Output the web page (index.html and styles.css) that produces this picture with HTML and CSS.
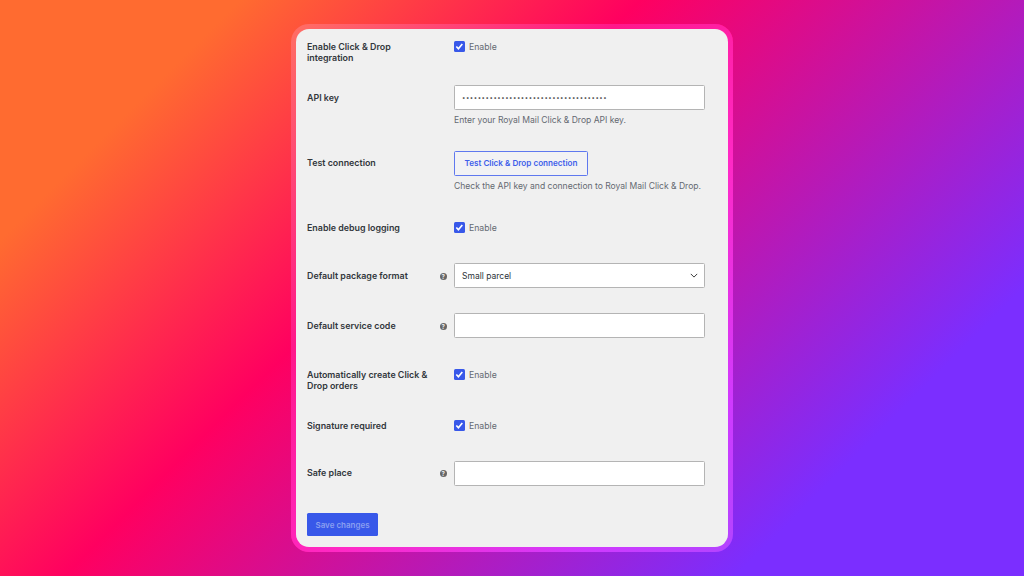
FILE: index.html
```html
<!DOCTYPE html>
<html lang="en">
<head>
<meta charset="utf-8">
<title>Click &amp; Drop settings</title>
<link rel="stylesheet" href="styles.css">
</head>
<body>
<main class="ring">
  <form class="panel">
    <div class="form-grid">
      <div class="label">Enable Click &amp; Drop integration</div>
      <div class="field">
        <label class="check"><span class="box"><svg viewBox="0 0 10 10"><path d="M2.2 5.2 4.2 7.3 7.9 2.8"/></svg></span>Enable</label>
      </div>

      <div class="label label-input">API key</div>
      <div class="field">
        <div class="input dots">•••••••••••••••••••••••••••••••••••••</div>
        <p class="desc">Enter your Royal Mail Click &amp; Drop API key.</p>
      </div>

      <div class="label label-input label-tight">Test connection</div>
      <div class="field">
        <button type="button" class="btn-outline">Test Click &amp; Drop connection</button>
        <p class="desc">Check the API key and connection to Royal Mail Click &amp; Drop.</p>
      </div>

      <div class="label">Enable debug logging</div>
      <div class="field">
        <label class="check"><span class="box"><svg viewBox="0 0 10 10"><path d="M2.2 5.2 4.2 7.3 7.9 2.8"/></svg></span>Enable</label>
      </div>

      <div class="label label-input label-help">Default package format<span class="help">?</span></div>
      <div class="field">
        <div class="input select"><span class="select-text">Small parcel</span><svg class="chev" viewBox="0 0 10 6"><path d="M1 1 5 5 9 1"/></svg></div>
      </div>

      <div class="label label-input label-help">Default service code<span class="help">?</span></div>
      <div class="field"><div class="input"></div></div>

      <div class="label">Automatically create Click &amp; Drop orders</div>
      <div class="field">
        <label class="check"><span class="box"><svg viewBox="0 0 10 10"><path d="M2.2 5.2 4.2 7.3 7.9 2.8"/></svg></span>Enable</label>
      </div>

      <div class="label">Signature required</div>
      <div class="field">
        <label class="check"><span class="box"><svg viewBox="0 0 10 10"><path d="M2.2 5.2 4.2 7.3 7.9 2.8"/></svg></span>Enable</label>
      </div>

      <div class="label label-input label-tight label-help">Safe place<span class="help">?</span></div>
      <div class="field"><div class="input"></div></div>
    </div>
    <button type="button" class="btn-save">Save changes</button>
  </form>
</main>
</body>
</html>
```
FILE: styles.css
```css
* { box-sizing: border-box; }
html, body { height: 100%; }
body {
  margin: 0;
  height: 576px;
  overflow: hidden;
  display: flex;
  justify-content: center;
  align-items: center;
  font-family: Inter, "Liberation Sans", sans-serif;
  background: linear-gradient(135deg, #ff6b30 0%, #ff6b30 15%, #ff0060 40%, #7b2eff 82%, #7b2eff 100%);
}
.ring {
  position: relative;
  width: 442px;
  height: 528px;
  padding: 5px;
}
.ring::before {
  content: "";
  position: absolute;
  inset: 0;
  border-radius: 18px;
  background: rgb(50, 24, 42);
  mix-blend-mode: plus-lighter;
}
.panel {
  position: relative;
  height: 518px;
  padding: 11px 11px 0;
  border-radius: 13px;
  background: #f0f0f0;
}
.form-grid {
  display: grid;
  grid-template-columns: 147px 251px;
  grid-template-rows: 45px 66px 70px 42px 50px 55px 51px 42px 52px;
}
.label {
  padding-right: 16px;
  padding-top: 1px;
  font-size: 8.9px;
  line-height: 11px;
  font-weight: 600;
  color: #32373c;
}
.label-input { padding-top: 7px; }
.label-tight { padding-top: 6px; }
.label-help {
  display: flex;
  justify-content: space-between;
  align-items: flex-start;
  padding-right: 7px;
}
.help {
  width: 7.5px;
  height: 7.5px;
  margin-top: 2.5px;
  border-radius: 50%;
  background: #666;
  color: #f0f0f0;
  font-size: 6px;
  line-height: 7.5px;
  text-align: center;
  font-weight: 700;
}
.check {
  display: flex;
  align-items: center;
  gap: 4.5px;
  height: 13px;
  font-size: 8.7px;
  color: #646970;
}
.box {
  width: 10.5px;
  height: 10.5px;
  border-radius: 1.5px;
  background: #3858e9;
  display: block;
}
.box svg { display: block; width: 10.5px; height: 10.5px; }
.box path { fill: none; stroke: #fff; stroke-width: 1.6; }
.input {
  height: 25px;
  background: #fff;
  border: 1px solid #b4b4b4;
  border-radius: 1.5px;
  padding: 0 7px;
  font-size: 8.5px;
  line-height: 23px;
  color: #2c3338;
}
.dots {
  font-size: 6px;
  letter-spacing: 0.55px;
  color: #444;
}
.select {
  display: flex;
  justify-content: space-between;
  align-items: center;
  padding-right: 6px;
}
.select-text { padding-top: 1px; }
.chev { width: 8px; height: 5px; }
.chev path { fill: none; stroke: #333; stroke-width: 1.2; }
.desc {
  margin: 5px 0 0;
  font-size: 8.55px;
  line-height: 11px;
  color: #646970;
}
.btn-outline {
  display: block;
  width: 134px;
  height: 25px;
  padding: 0 0 2px;
  background: #f2f2f4;
  border: 1px solid #5f78ef;
  border-radius: 1.5px;
  color: #3f5eea;
  font: 600 8.15px Inter, "Liberation Sans", sans-serif;
}
.btn-save {
  display: block;
  width: 71px;
  height: 23px;
  padding: 0;
  background: #3858e9;
  border: 0;
  border-radius: 1.5px;
  color: #8a9ff0;
  font: 600 8px Inter, "Liberation Sans", sans-serif;
}
```
